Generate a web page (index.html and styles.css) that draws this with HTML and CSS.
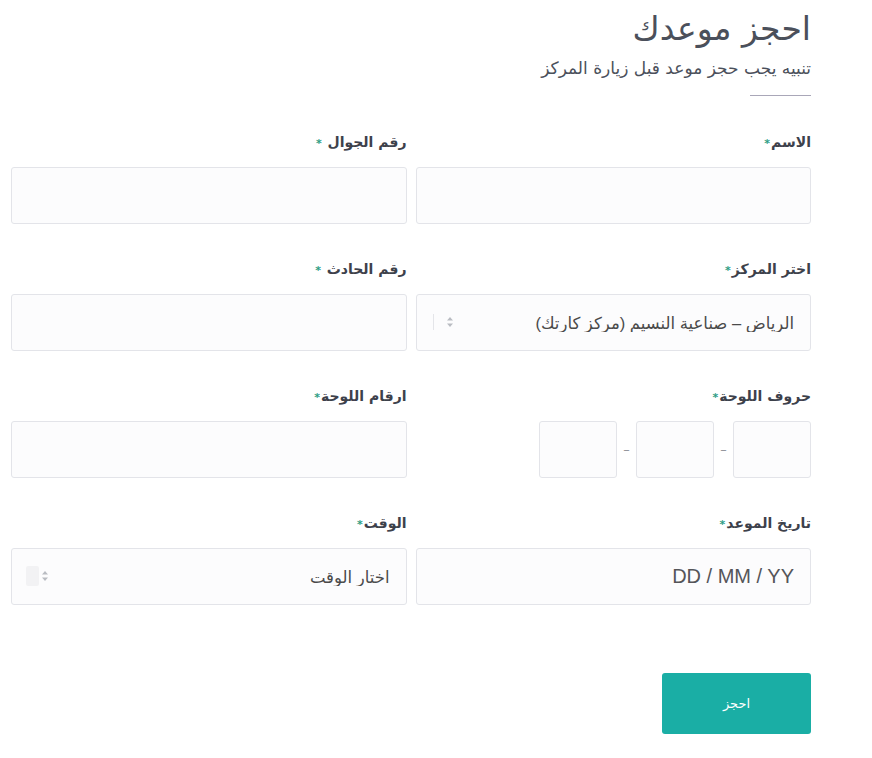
FILE: index.html
```html
<!DOCTYPE html>
<html lang="ar" dir="rtl">
<head>
    <meta charset="UTF-8">
    <meta name="viewport" content="width=device-width, initial-scale=1.0">
    <title>احجز موعدك</title>
    <link rel="stylesheet" href="styles.css">
</head>
<body>
    <div class="booking">
        <div class="booking-head">
            <h1>احجز موعدك</h1>
            <p>تنبيه يجب حجز موعد قبل زيارة المركز</p>
            <span class="head-line"></span>
        </div>

        <form class="booking-form">
            <div class="field">
                <label>الاسم<span class="req">*</span></label>
                <input type="text" class="box">
            </div>
            <div class="field">
                <label>رقم الجوال <span class="req">*</span></label>
                <input type="text" class="box">
            </div>

            <div class="field">
                <label>اختر المركز<span class="req">*</span></label>
                <div class="select-wrap">
                    <select class="box">
                        <option>الرياض – صناعية النسيم (مركز كارتك)</option>
                    </select>
                    <span class="arrows">
                        <span class="arrows-sep"></span>
                        <svg width="8" height="12" viewBox="0 0 8 12"><path d="M4 1 L7 4.5 H1 Z M4 11 L7 7.5 H1 Z" fill="#b9bcc2"/></svg>
                    </span>
                </div>
            </div>
            <div class="field">
                <label>رقم الحادث <span class="req">*</span></label>
                <input type="text" class="box">
            </div>

            <div class="field">
                <label>حروف اللوحة<span class="req">*</span></label>
                <div class="plate">
                    <input type="text" class="box plate-box" maxlength="1">
                    <span class="dash">–</span>
                    <input type="text" class="box plate-box" maxlength="1">
                    <span class="dash">–</span>
                    <input type="text" class="box plate-box" maxlength="1">
                </div>
            </div>
            <div class="field">
                <label>ارقام اللوحة<span class="req">*</span></label>
                <input type="text" class="box">
            </div>

            <div class="field">
                <label>تاريخ الموعد<span class="req">*</span></label>
                <input type="text" class="box date-box" placeholder="DD / MM / YY">
            </div>
            <div class="field">
                <label>الوقت<span class="req">*</span></label>
                <div class="select-wrap">
                    <select class="box">
                        <option>اختار الوقت</option>
                    </select>
                    <span class="arrows">
                        <span class="arrows-block"></span>
                        <svg width="8" height="12" viewBox="0 0 8 12"><path d="M4 1 L7 4.5 H1 Z M4 11 L7 7.5 H1 Z" fill="#b9bcc2"/></svg>
                    </span>
                </div>
            </div>

            <div class="actions">
                <button type="button" class="btn-book">احجز</button>
            </div>
        </form>
    </div>
</body>
</html>
```

FILE: styles.css
```css
* {
    margin: 0;
    padding: 0;
    box-sizing: border-box;
}

body {
    background: #ffffff;
    color: #3d414b;
    font-family: 'DejaVu Sans', sans-serif;
}

.booking {
    width: 800px;
    margin-right: 61px;
    padding-top: 9px;
}

/* Header */
.booking-head {
    display: flex;
    flex-direction: column;
    align-items: flex-start;
}

.booking-head h1 {
    font-size: 33px;
    font-weight: normal;
    color: #4b505b;
    line-height: 40px;
}

.booking-head p {
    font-size: 17px;
    color: #4b505b;
    margin-top: 7px;
    line-height: 24px;
}

.head-line {
    display: block;
    width: 61px;
    height: 1px;
    background: #a9a7b8;
    margin-top: 15px;
}

/* Form grid */
.booking-form {
    display: grid;
    grid-template-columns: 1fr 1fr;
    column-gap: 9px;
    row-gap: 35px;
    margin-top: 36px;
}

.field {
    display: flex;
    flex-direction: column;
    gap: 15px;
}

.field label {
    height: 20px;
    font-size: 14px;
    font-weight: bold;
    color: #3d414b;
    line-height: 20px;
}

.req {
    color: #2e9d84;
    font-size: 11px;
    margin-right: 1px;
}

.box {
    width: 100%;
    height: 57px;
    background: #fcfcfd;
    border: 1px solid #e3e4e9;
    border-radius: 3px;
    padding: 0 16px;
    font-family: 'Liberation Sans', 'DejaVu Sans', sans-serif;
    font-size: 16.5px;
    color: #4a4a4a;
    outline: none;
}

.date-box {
    font-size: 20px;
    text-align: right;
}

.date-box::placeholder {
    color: #555559;
}

/* Selects */
.select-wrap {
    position: relative;
}

.select-wrap select {
    appearance: none;
    -webkit-appearance: none;
    cursor: pointer;
}

.arrows {
    position: absolute;
    top: 22px;
    left: 30px;
    display: flex;
    pointer-events: none;
}

.arrows svg {
    position: relative;
}

.arrows-sep {
    position: absolute;
    left: -13px;
    top: -2px;
    width: 1px;
    height: 16px;
    background: #e4e5e9;
}

.arrows-block {
    position: absolute;
    left: -15px;
    top: -4px;
    width: 13px;
    height: 20px;
    background: #f2f2f4;
    border-radius: 2px;
}

/* Plate letters */
.plate {
    display: flex;
    align-items: center;
    gap: 4px;
}

.plate-box {
    width: 78px;
    flex: none;
    text-align: center;
}

.dash {
    width: 11px;
    text-align: center;
    color: #8d9097;
    font-size: 13px;
}

/* Submit */
.actions {
    grid-column: 1 / -1;
    margin-top: 33px;
}

.btn-book {
    width: 149px;
    height: 61px;
    background: #1aaea5;
    border: none;
    border-radius: 3px;
    color: #ffffff;
    font-family: 'DejaVu Sans', sans-serif;
    font-size: 13px;
    cursor: pointer;
}
```
